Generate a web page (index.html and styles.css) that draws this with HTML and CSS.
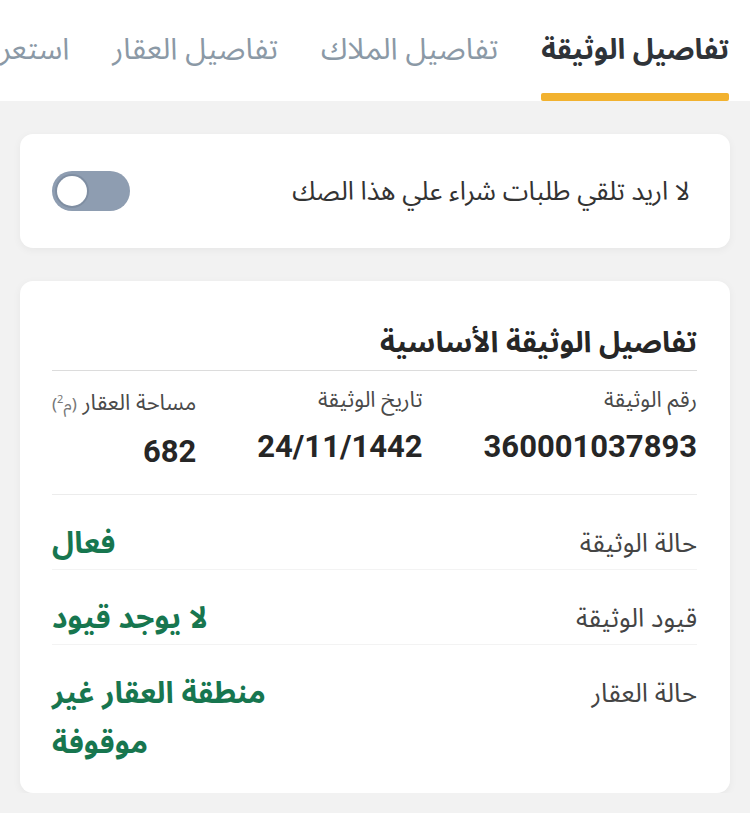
FILE: index.html
```html
<!DOCTYPE html>
<html lang="ar" dir="rtl">
<head>
<meta charset="utf-8">
<title>تفاصيل الوثيقة</title>
<link rel="stylesheet" href="styles.css">
</head>
<body>
<header class="tabs">
  <div class="tab active">تفاصيل الوثيقة</div>
  <div class="tab">تفاصيل الملاك</div>
  <div class="tab">تفاصيل العقار</div>
  <div class="tab">استعراض الطلبات</div>
</header>

<main class="content">
  <section class="card toggle-card">
    <span class="toggle-text">لا اريد تلقي طلبات شراء علي هذا الصك</span>
    <span class="switch"><span class="knob"></span></span>
  </section>

  <section class="card details">
    <h2 class="details-title">تفاصيل الوثيقة الأساسية</h2>
    <div class="summary">
      <div class="summary-item">
        <div class="summary-label">رقم الوثيقة</div>
        <div class="summary-value">360001037893</div>
      </div>
      <div class="summary-item">
        <div class="summary-label">تاريخ الوثيقة</div>
        <div class="summary-value">24/11/1442</div>
      </div>
      <div class="summary-item">
        <div class="summary-label">مساحة العقار <span class="unit">(م<sup>2</sup>)</span></div>
        <div class="summary-value">682</div>
      </div>
    </div>
    <div class="row">
      <div class="row-label">حالة الوثيقة</div>
      <div class="row-value">فعال</div>
    </div>
    <div class="row">
      <div class="row-label">قيود الوثيقة</div>
      <div class="row-value">لا يوجد قيود</div>
    </div>
    <div class="row last">
      <div class="row-label">حالة العقار</div>
      <div class="row-value">منطقة العقار غير موقوفة</div>
    </div>
  </section>
</main>
</body>
</html>
```

FILE: styles.css
```css
* { box-sizing: border-box; }

html, body {
  margin: 0;
  padding: 0;
}

body {
  background: #f2f2f2;
  font-family: "Noto Sans Arabic", "Noto Kufi Arabic", "DejaVu Sans", sans-serif;
  color: #2b2b2b;
  width: 750px;
  overflow: hidden;
}

.tabs {
  background: #ffffff;
  height: 101px;
  display: flex;
  gap: 43px;
  padding-right: 21px;
  overflow: hidden;
  white-space: nowrap;
}

.tab {
  font-size: 30px;
  line-height: 40px;
  padding-top: 30px;
  color: #8b99a6;
  flex: none;
  height: 101px;
  position: relative;
}

.tab.active {
  font-size: 28.5px;
  color: #2f3338;
  font-weight: 700;
}

.tab.active::after {
  content: "";
  position: absolute;
  left: 0;
  right: 0;
  bottom: 0;
  height: 8px;
  background: #f2b22f;
  border-radius: 2px;
}

.content {
  padding: 33px 20px 0;
  display: flex;
  flex-direction: column;
  gap: 33px;
}

.card {
  background: #ffffff;
  border-radius: 13px;
  box-shadow: 0 2px 8px rgba(0, 0, 0, 0.05);
}

.toggle-card {
  height: 114px;
  display: flex;
  align-items: center;
  justify-content: space-between;
  padding: 0 40px 0 32px;
}

.toggle-text {
  font-size: 26px;
  color: #333;
}

.switch {
  width: 78px;
  height: 40px;
  border-radius: 20px;
  background: #8e9db1;
  display: flex;
  align-items: center;
  justify-content: flex-end;
  padding: 0 5px;
}

.knob {
  width: 30px;
  height: 30px;
  border-radius: 50%;
  background: #ffffff;
  box-shadow: 0 0 0 2px #7f8ea2;
}

.details {
  padding: 42px 33px 24px 32px;
}

.details-title {
  margin: 0;
  font-size: 29px;
  line-height: 40px;
  font-weight: 700;
  color: #262626;
  padding-bottom: 7px;
  border-bottom: 1px solid #dcdcdc;
}

.summary {
  display: flex;
  justify-content: space-between;
  padding: 14px 0 22px;
  border-bottom: 1px solid #ececec;
}

.summary-label {
  font-size: 22px;
  line-height: 30px;
  color: #4a4a4a;
}

.unit {
  font-size: 17px;
  color: #777;
}

.unit sup {
  font-size: 11px;
}

.summary-value {
  margin-top: 12px;
  font-family: "Roboto", "DejaVu Sans", sans-serif;
  font-size: 31px;
  line-height: 40px;
  font-weight: 700;
  color: #262626;
  direction: ltr;
  text-align: right;
}

.row {
  display: flex;
  justify-content: space-between;
  align-items: flex-start;
  padding-top: 24px;
  border-bottom: 1px solid #f3f3f3;
}

.row.last {
  border-bottom: none;
}

.row-label {
  font-size: 26px;
  line-height: 50px;
  color: #444;
}

.row-value {
  font-size: 30px;
  line-height: 50px;
  font-weight: 700;
  color: #17764f;
  max-width: 240px;
  text-align: left;
}
```
